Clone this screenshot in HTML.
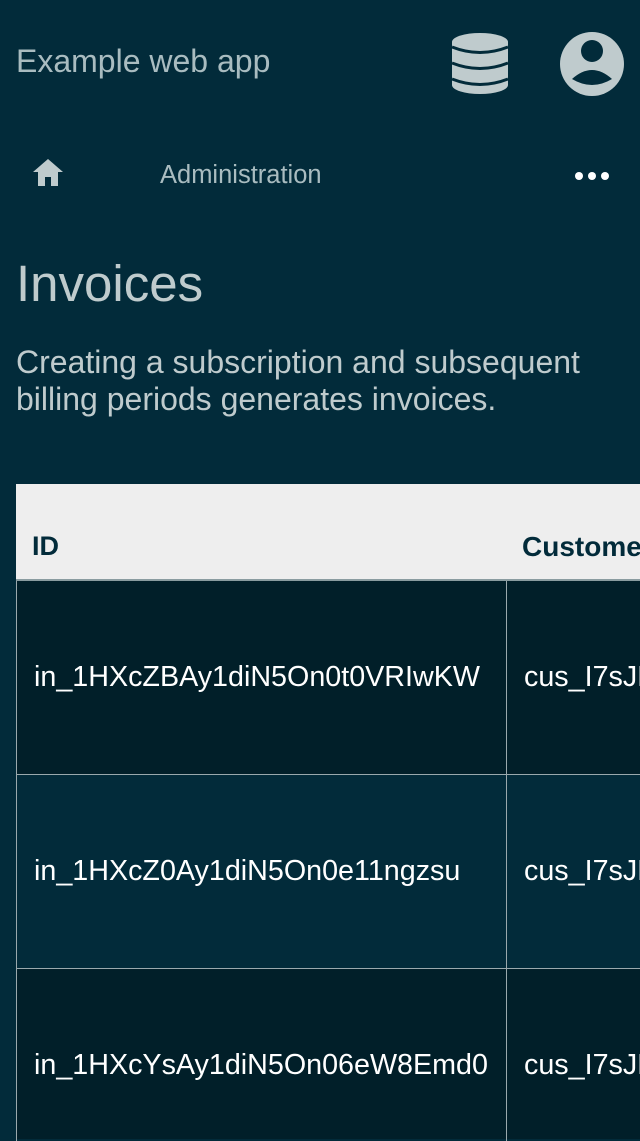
<!DOCTYPE html>
<html><head><style>
body{margin:0;width:640px;height:1136px;overflow:hidden;background:#022b3a;font-family:"Liberation Sans",sans-serif;position:relative}
.a{position:absolute;white-space:nowrap}
.t{color:#a9bcc0}
</style></head><body>
<div class="a t" style="left:16px;top:43px;font-size:32px;">Example web app</div>
<svg class="a" style="left:451px;top:31px" width="58" height="66" viewBox="0 0 58 66">
<g fill="#bfcbcd">
<rect x="1" y="2" width="56" height="61" rx="28" ry="9"/>
</g>
<g fill="none" stroke="#022b3a" stroke-width="3">
<path d="M1 16 Q29 27 57 16"/>
<path d="M1 32 Q29 43 57 32"/>
<path d="M1 48 Q29 59 57 48"/>
</g></svg>
<svg class="a" style="left:559px;top:31px" width="66" height="66" viewBox="0 0 66 66">
<ellipse cx="33" cy="33" rx="32" ry="32" fill="#bfcbcd"/>
<circle cx="33" cy="20" r="11" fill="#022b3a"/>
<path d="M13 48 Q33 30 53 48 Q33 60 13 48Z" fill="#022b3a"/>
</svg>
<svg class="a" style="left:32px;top:158px" width="32" height="30" viewBox="0 0 32 30">
<path d="M16 1 L1 14 H6 V28 H13 V19 H19 V28 H26 V14 H31Z" fill="#bfcbcd"/>
</svg>
<div class="a t" style="left:160px;top:161px;font-size:25.5px;">Administration</div>
<svg class="a" style="left:574px;top:169px" width="36" height="14"><g fill="#fff"><circle cx="5" cy="7" r="4"/><circle cx="18" cy="7" r="4"/><circle cx="31" cy="7" r="4"/></g></svg>
<div class="a" style="left:16px;top:254px;font-size:51px;color:#bfcbcd">Invoices</div>
<div class="a" style="left:16px;top:344px;font-size:32px;line-height:37px;color:#bfcbcd;white-space:normal;width:610px">Creating a subscription and subsequent billing periods generates invoices.</div>
<div class="a" style="left:16px;top:484px;width:624px;height:96px;background:#eeeeee"></div>
<div class="a" style="left:32px;top:531px;font-size:27px;font-weight:bold;color:#022b3a">ID</div>
<div class="a" style="left:522px;top:531px;font-size:28px;font-weight:bold;color:#022b3a">Customer</div>
<div class="a" style="left:16px;top:579px;width:624px;height:2px;background:#8a9ca0"></div>
<div class="a" style="left:16px;top:581px;width:624px;height:193px;background:#011f29"></div>
<div class="a" style="left:16px;top:775px;width:624px;height:193px;background:#022b3a"></div>
<div class="a" style="left:16px;top:969px;width:624px;height:170px;background:#011f29"></div>
<div class="a" style="left:16px;top:774px;width:624px;height:1px;background:#9aa9ad"></div>
<div class="a" style="left:16px;top:968px;width:624px;height:1px;background:#9aa9ad"></div>
<div class="a" style="left:16px;top:581px;width:1px;height:560px;background:#9aa9ad"></div>
<div class="a" style="left:506px;top:581px;width:1px;height:560px;background:#9aa9ad"></div>
<div class="a" style="left:34px;top:661px;font-size:28.7px;color:#fff">in_1HXcZBAy1diN5On0t0VRIwKW</div>
<div class="a" style="left:524px;top:661px;font-size:28.7px;color:#fff">cus_I7sJK</div>
<div class="a" style="left:34px;top:855px;font-size:28.7px;color:#fff">in_1HXcZ0Ay1diN5On0e11ngzsu</div>
<div class="a" style="left:524px;top:855px;font-size:28.7px;color:#fff">cus_I7sJK</div>
<div class="a" style="left:34px;top:1049px;font-size:28.7px;color:#fff">in_1HXcYsAy1diN5On06eW8Emd0</div>
<div class="a" style="left:524px;top:1049px;font-size:28.7px;color:#fff">cus_I7sJK</div>
</body></html>
